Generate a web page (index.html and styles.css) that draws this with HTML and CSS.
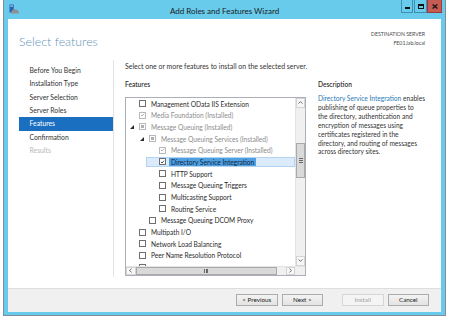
FILE: index.html
```html
<!DOCTYPE html>
<html>
<head>
<meta charset="utf-8">
<link rel="stylesheet" href="styles.css">
</head>
<body>
<div class="window">
  <div class="titlebar">
    <svg class="app-icon" viewBox="0 0 10 10" width="10" height="10">
      <rect x="0.5" y="0.5" width="4.2" height="8" fill="#2a62ad"/>
      <rect x="1.2" y="1.4" width="2.8" height="1.2" fill="#a9cdf2"/>
      <path d="M2 9.6 Q2.3 5.2 6 5.2 Q9.8 5.2 10 9.6Z" fill="#8c9196"/>
    </svg>
    <div class="title">Add Roles and Features Wizard</div>
    <div class="controls">
      <div class="ctl min"><span class="g-min"></span></div>
      <div class="ctl max"><span class="g-max"></span></div>
      <div class="ctl close">
        <svg viewBox="0 0 6 5" width="6" height="5"><path d="M0.6 0.4L5.4 4.6M5.4 0.4L0.6 4.6" stroke="#1a1a1a" stroke-width="1.3"/></svg>
      </div>
    </div>
  </div>
  <div class="client">
    <div class="header">
      <h1 class="page-title">Select features</h1>
      <div class="dest">
        <div>DESTINATION SERVER</div>
        <div>FE01.lab.local</div>
      </div>
    </div>
    <div class="body">
      <nav class="nav">
        <div class="nav-item">Before You Begin</div>
        <div class="nav-item">Installation Type</div>
        <div class="nav-item">Server Selection</div>
        <div class="nav-item">Server Roles</div>
        <div class="nav-item active">Features</div>
        <div class="nav-item">Confirmation</div>
        <div class="nav-item disabled">Results</div>
      </nav>
      <main class="main">
        <p class="intro">Select one or more features to install on the selected server.</p>
        <div class="columns">
          <section class="features">
            <h2 class="label-head">Features</h2>
            <div class="tree-box">
              <div class="tree-view">
                <div class="tree">
                  <div class="row"><div class="item l0"><span class="exp"></span><span class="cb"></span><span class="txt">Management OData IIS Extension</span></div></div>
                  <div class="row"><div class="item l0 off"><span class="exp"></span><span class="cb"><svg viewBox="0 0 7 7"><path d="M1.3 3.4L2.8 4.9L5.6 1.7" fill="none" stroke="#9a9a9a" stroke-width="1.1"/></svg></span><span class="txt">Media Foundation (Installed)</span></div></div>
                  <div class="row"><div class="item l0 off"><span class="exp"><svg viewBox="0 0 4 4"><path d="M4 0V4H0Z" fill="#2b2b2b"/></svg></span><span class="cb"><i class="ind"></i></span><span class="txt">Message Queuing (Installed)</span></div></div>
                  <div class="row"><div class="item l1 off"><span class="exp"><svg viewBox="0 0 4 4"><path d="M4 0V4H0Z" fill="#2b2b2b"/></svg></span><span class="cb"><i class="ind"></i></span><span class="txt">Message Queuing Services (Installed)</span></div></div>
                  <div class="row"><div class="item l2 off"><span class="exp"></span><span class="cb"><svg viewBox="0 0 7 7"><path d="M1.3 3.4L2.8 4.9L5.6 1.7" fill="none" stroke="#9a9a9a" stroke-width="1.1"/></svg></span><span class="txt">Message Queuing Server (Installed)</span></div></div>
                  <div class="row"><div class="item l2 sel"><span class="exp"></span><span class="cb"><svg viewBox="0 0 7 7"><path d="M1.3 3.4L2.8 4.9L5.6 1.7" fill="none" stroke="#1e1e1e" stroke-width="1.1"/></svg></span><span class="txt">Directory Service Integration</span></div></div>
                  <div class="row"><div class="item l2"><span class="exp"></span><span class="cb"></span><span class="txt">HTTP Support</span></div></div>
                  <div class="row"><div class="item l2"><span class="exp"></span><span class="cb"></span><span class="txt">Message Queuing Triggers</span></div></div>
                  <div class="row"><div class="item l2"><span class="exp"></span><span class="cb"></span><span class="txt">Multicasting Support</span></div></div>
                  <div class="row"><div class="item l2"><span class="exp"></span><span class="cb"></span><span class="txt">Routing Service</span></div></div>
                  <div class="row"><div class="item l1"><span class="exp"></span><span class="cb"></span><span class="txt">Message Queuing DCOM Proxy</span></div></div>
                  <div class="row"><div class="item l0"><span class="exp"></span><span class="cb"></span><span class="txt">Multipath I/O</span></div></div>
                  <div class="row"><div class="item l0"><span class="exp"></span><span class="cb"></span><span class="txt">Network Load Balancing</span></div></div>
                  <div class="row"><div class="item l0"><span class="exp"></span><span class="cb"></span><span class="txt">Peer Name Resolution Protocol</span></div></div>
                  <div class="row"><div class="item l0"><span class="exp"></span><span class="cb"></span></div></div>
                </div>
                <div class="vscroll">
                  <div class="sb-btn"><svg viewBox="0 0 5 3" width="5" height="3"><path d="M0.5 2.6L2.5 0.6L4.5 2.6" fill="none" stroke="#606060" stroke-width="0.9"/></svg></div>
                  <div class="vtrack"><div class="vthumb"><i></i><i></i><i></i></div></div>
                  <div class="sb-btn"><svg viewBox="0 0 5 3" width="5" height="3"><path d="M0.5 0.4L2.5 2.4L4.5 0.4" fill="none" stroke="#606060" stroke-width="0.9"/></svg></div>
                </div>
              </div>
              <div class="hscroll">
                <div class="sb-btn h"><svg viewBox="0 0 3 5" width="3" height="5"><path d="M2.6 0.5L0.6 2.5L2.6 4.5" fill="none" stroke="#606060" stroke-width="0.9"/></svg></div>
                <div class="hthumb"><i></i><i></i><i></i></div>
                <div class="hspace"></div>
                <div class="sb-btn h"><svg viewBox="0 0 3 5" width="3" height="5"><path d="M0.4 0.5L2.4 2.5L0.4 4.5" fill="none" stroke="#606060" stroke-width="0.9"/></svg></div>
                <div class="corner"></div>
              </div>
            </div>
          </section>
          <section class="desc">
            <h2 class="label-head">Description</h2>
            <p><a>Directory Service Integration</a> enables<br>publishing of queue properties to<br>the directory, authentication and<br>encryption of messages using<br>certificates registered in the<br>directory, and routing of messages<br>across directory sites.</p>
          </section>
        </div>
      </main>
    </div>
    <div class="footer">
      <button class="btn">&lt; Previous</button>
      <button class="btn">Next &gt;</button>
      <button class="btn disabled gap">Install</button>
      <button class="btn">Cancel</button>
    </div>
  </div>
</div>
</body>
</html>
```

FILE: styles.css
```css
* { box-sizing: border-box; margin: 0; padding: 0; }
html, body { width: 450px; height: 319px; overflow: hidden; }
body {
  background: #ffffff;
  font-family: Lato, "Open Sans", sans-serif;
  font-size: 6.6px;
  color: #2a2a2a;
}

.window {
  margin-left: 3px;
  width: 443px;
  height: 316px;
  border: 1px solid #7f8e98;
  border-top: 0;
  background: #69cbec;
  padding: 0 4px 3px;
  display: flex;
  flex-direction: column;
}

.titlebar { height: 19px; flex: none; position: relative; }
.app-icon { position: absolute; left: 1px; top: 4px; }
.title {
  position: absolute; left: 0; right: 0; top: 6px;
  text-align: center; font-size: 8px; line-height: 10px; color: #1b1b1b;
}
.controls { position: absolute; right: -1px; top: 0; display: flex; }
.ctl {
  height: 13px; display: flex; align-items: center; justify-content: center;
  border: 1px solid #3d8fb3; border-top: 0;
}
.ctl.min { width: 12px; margin-right: 1px; }
.ctl.max { width: 13px; }
.ctl.close { width: 15px; background: #c75a52; border-color: #9c3b35; }
.g-min { width: 5px; height: 2px; background: #111; margin-top: 3px; }
.g-max { width: 6px; height: 5px; border: 1px solid #111; border-top-width: 2px; }

.client { flex: 1; min-height: 0; background: #ffffff; display: flex; flex-direction: column; }

.header { height: 39px; flex: none; position: relative; padding: 14px 0 0 11px; }
.page-title { font-family: Lato, sans-serif; font-weight: 300; font-size: 12.4px; line-height: 18px; color: #6494b8; }
.dest {
  position: absolute; right: 16px; top: 11px; text-align: right;
  font-size: 5.2px; line-height: 9px; color: #4a4a4a;
}

.body { flex: 1; min-height: 0; display: flex; }
.nav {
  width: 106px; flex: none; margin: 2px 0 11px; padding-top: 4px;
  border-right: 1px solid #e3e3e3;
}
.nav-item { height: 13.33px; line-height: 13.33px; margin-left: 11px; padding-left: 10.5px; color: #333; font-size: 6.8px; }
.nav-item.active { background: #1a6fc0; color: #ffffff; }
.nav-item.disabled { color: #b8b8b8; }

.main { flex: 1; padding: 4px 0 0 11px; }
.intro { line-height: 9px; color: #333; font-size: 6.95px; }
.columns { display: flex; margin-top: 9px; }
.features { width: 181px; flex: none; }
.label-head { font-size: 6.6px; font-weight: 600; line-height: 9px; color: #2f2f2f; }

.tree-box { margin-top: 7.7px; height: 179px; border: 1px solid #aab0b6; display: flex; flex-direction: column; }
.tree-view { height: 168px; display: flex; }
.tree { flex: 1; overflow: hidden; }
.row { height: 11.7px; display: flex; }
.item { flex: 1; display: flex; align-items: center; padding-left: 4px; }
.item.l1 { margin-left: 10px; }
.item.l2 { margin-left: 20px; }
.exp { width: 9px; height: 4px; flex: none; display: flex; }
.exp svg { width: 4px; height: 4px; }
.cb {
  width: 7px; height: 7px; flex: none; border: 1px solid #6e6e6e; background: #fff;
  display: flex; align-items: center; justify-content: center;
}
.cb svg { width: 6px; height: 6px; }
.off .cb { border-color: #b9b9b9; }
.ind { width: 3px; height: 3px; background: #b0b0b0; }
.txt { margin-left: 3px; padding: 0 2px; line-height: 8px; white-space: nowrap; color: #2a2a2a; }
.off .txt { color: #8c8c8c; }
.item.sel { background: #dcebfb; box-shadow: inset 0 0 0 1px #b2d4f3; margin-top: 0.6px; margin-bottom: 0.6px; }
.item.sel .txt { background: #4f9fe3; color: #0f2740; }

.vscroll { width: 10px; flex: none; background: #f0f0f0; border-left: 1px solid #e4e4e4; display: flex; flex-direction: column; }
.sb-btn { height: 10px; flex: none; display: flex; align-items: center; justify-content: center; background: #f7f7f7; border: 1px solid #d4d4d4; }
.vtrack { flex: 1; }
.vthumb {
  margin-top: 35px; height: 35px; background: #d9d9d9; border: 1px solid #a9a9a9;
  display: flex; flex-direction: column; align-items: center; justify-content: center; gap: 1px;
}
.vthumb i { width: 4px; height: 0.7px; background: #666; display: block; }
.hscroll { height: 9px; flex: none; display: flex; background: #f0f0f0; border-top: 1px solid #e4e4e4; }
.sb-btn.h { height: auto; width: 9.5px; }
.hthumb {
  width: 141px; background: #d9d9d9; border: 1px solid #a9a9a9;
  display: flex; align-items: center; justify-content: center; gap: 1px;
}
.hthumb i { width: 0.7px; height: 4px; background: #666; display: block; }
.hspace { flex: 1; }
.corner { width: 10px; background: #f0f0f0; }

.desc { margin-left: 12px; width: 118px; }
.desc p { margin-top: 5px; line-height: 8.9px; color: #333; }
.desc a { color: #2a7ab8; }

.footer {
  height: 24px; flex: none; background: #f0f0f0; border-top: 1px solid #dedede;
  display: flex; justify-content: flex-end; align-items: flex-start; padding: 5px 12px 0 0; gap: 4px;
}
.btn {
  width: 41.5px; height: 11.5px; border: 1px solid #acacac;
  background: linear-gradient(#f3f3f3, #e3e3e3);
  font-family: Lato, "Open Sans", sans-serif; font-size: 6.3px; color: #222; line-height: 9px;
}
.btn.gap { margin-left: 15px; }
.btn.disabled { background: #f4f4f4; border-color: #d5d5d5; color: #a3a3a3; }
```
